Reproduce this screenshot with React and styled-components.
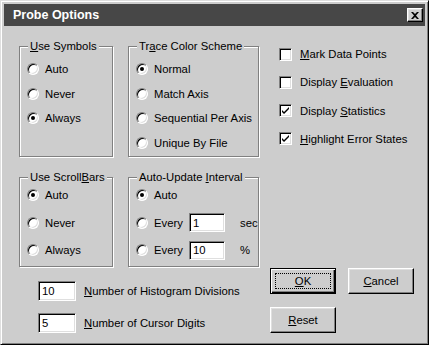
import React from "react";
import styled, { createGlobalStyle, css } from "styled-components";

const face = "#cdcdcd";

const GlobalStyle = createGlobalStyle`
  html, body { margin: 0; padding: 0; background: #fff; }
  body {
    font-family: "Liberation Sans", Arial, sans-serif;
    font-size: 11.3px;
    color: #000;
  }
`;

const Window = styled.div`
  width: 429px;
  height: 345px;
  box-sizing: border-box;
  background: ${face};
  border: 1px solid;
  border-color: #dfdfdf #000 #000 #dfdfdf;
  box-shadow: inset 1px 1px 0 #fff, inset -1px -1px 0 #808080;
  padding: 3px;
  display: flex;
  flex-direction: column;
`;

const TitleBar = styled.div`
  height: 22px;
  background: #474747;
  display: flex;
  align-items: center;
  justify-content: space-between;
  padding: 0 2px 0 9px;
  >.title{
    color: #fff;
    font-weight: bold;
    font-size: 12.5px;
  }
`;

const CloseButton = styled.div`
  width: 16px;
  height: 14px;
  box-sizing: border-box;
  background: ${face};
  border: 1px solid;
  border-color: #fff #000 #000 #fff;
  box-shadow: inset -1px -1px 0 #808080, inset 1px 1px 0 #dfdfdf;
  display: flex;
  align-items: center;
  justify-content: center;
`;

const Body = styled.div`
  padding: 20px 0 0 15px;
`;

const Top = styled.div`
  display: flex;
`;

const Groups = styled.div`
  display: grid;
  grid-template-columns: 94px 131px;
  grid-template-rows: 111px 90px;
  column-gap: 15px;
  row-gap: 20px;
`;

const Group = styled.div`
  position: relative;
  box-sizing: border-box;
  border: 1px solid #808080;
  box-shadow: inset 1px 1px 0 #fff, 1px 1px 0 #fff;
  padding: ${p => p.$top}px 0 0 7px;
  display: flex;
  flex-direction: column;
  gap: ${p => p.$gap}px;
`;

const Legend = styled.span`
  position: absolute;
  top: -8px;
  left: 8px;
  padding: 0 2px;
  line-height: 14px;
  background: ${face};
  white-space: nowrap;
`;

const Row = styled.label`
  display: flex;
  align-items: center;
  height: 16px;
  gap: 6px;
  white-space: nowrap;
`;

const RadioDot = styled.span`
  position: relative;
  flex: none;
  width: 12px;
  height: 12px;
  box-sizing: border-box;
  border-radius: 50%;
  border: 1px solid;
  border-color: #808080 #fff #fff #808080;
  box-shadow: inset 1px 1px 0 #000, inset -1px -1px 0 #dfdfdf;
  background: #fff;
  ${p => p.$on && css`
    &::after{
      content: "";
      position: absolute;
      left: 3px;
      top: 3px;
      width: 4px;
      height: 4px;
      border-radius: 50%;
      background: #000;
    }
  `}
`;

const EveryText = styled.span`
  width: 29px;
`;

const Unit = styled.span`
  margin-left: 9px;
`;

const Checks = styled.div`
  margin-left: 20px;
  display: flex;
  flex-direction: column;
  gap: 12.33px;
`;

const CheckRow = styled.label`
  display: flex;
  align-items: center;
  height: 16px;
  gap: 8px;
  white-space: nowrap;
`;

const CheckBox = styled.span`
  flex: none;
  width: 13px;
  height: 13px;
  box-sizing: border-box;
  border: 1px solid;
  border-color: #808080 #fff #fff #808080;
  box-shadow: inset 1px 1px 0 #000, inset -1px -1px 0 #dfdfdf;
  background: #fff;
  display: flex;
  align-items: center;
  justify-content: center;
`;

const TextBox = styled.input`
  box-sizing: border-box;
  width: ${p => p.$w}px;
  height: ${p => p.$h}px;
  margin: 0;
  padding: 0 3px;
  font: inherit;
  color: #000;
  background: #fff;
  border: 1px solid;
  border-color: #808080 #fff #fff #808080;
  box-shadow: inset 1px 1px 0 #000, inset -1px -1px 0 #dfdfdf;
  outline: none;
`;

const Bottom = styled.div`
  display: flex;
  margin-top: 1px;
`;

const Fields = styled.div`
  width: 232px;
  margin-left: 19px;
  padding-top: 13px;
  display: flex;
  flex-direction: column;
  gap: 12px;
`;

const FieldRow = styled.div`
  display: flex;
  align-items: center;
  gap: 8px;
  white-space: nowrap;
`;

const Buttons = styled.div`
  display: grid;
  grid-template-columns: 66px 66px;
  grid-auto-rows: 26px;
  column-gap: 12px;
  row-gap: 13px;
`;

const Button = styled.button`
  box-sizing: border-box;
  width: 66px;
  height: 26px;
  padding: 0;
  font: inherit;
  color: #000;
  background: ${face};
  border: 1px solid;
  border-color: #fff #000 #000 #fff;
  box-shadow: inset -1px -1px 0 #808080, inset 1px 1px 0 #dfdfdf;
  display: flex;
  align-items: center;
  justify-content: center;
  ${p => p.$default && css`
    border-color: #000;
    box-shadow: inset 1px 1px 0 #fff, inset -1px -1px 0 #000, inset -2px -2px 0 #808080;
    >span{
      flex: 1;
      align-self: stretch;
      margin: 4px;
      border: 1px dotted #000;
      display: flex;
      align-items: center;
      justify-content: center;
    }
  `}
`;

const Radio = ({ on, children }) => (
  <Row>
    <RadioDot $on={on} />
    {children}
  </Row>
);

const Check = ({ on, children }) => (
  <CheckRow>
    <CheckBox>
      {on && (
        <svg width="7" height="7" viewBox="0 0 7 7">
          <path d="M0 3 L0 5 L2 7 L7 2 L7 0 L2 5 Z" fill="#000" />
        </svg>
      )}
    </CheckBox>
    <span>{children}</span>
  </CheckRow>
);

export default function App() {
  return (
    <Window>
      <GlobalStyle />
      <TitleBar>
        <span className="title">Probe Options</span>
        <CloseButton>
          <svg width="8" height="7" viewBox="0 0 8 7">
            <path d="M0 0 H2 L4 2 L6 0 H8 L5 3.5 L8 7 H6 L4 5 L2 7 H0 L3 3.5 Z" fill="#000" />
          </svg>
        </CloseButton>
      </TitleBar>
      <Body>
        <Top>
          <Groups>
            <Group $top={14} $gap={8.67}>
              <Legend><u>U</u>se Symbols</Legend>
              <Radio>Auto</Radio>
              <Radio>Never</Radio>
              <Radio on>Always</Radio>
            </Group>
            <Group $top={14} $gap={8.67}>
              <Legend>Tr<u>a</u>ce Color Scheme</Legend>
              <Radio on>Normal</Radio>
              <Radio>Match Axis</Radio>
              <Radio>Sequential Per Axis</Radio>
              <Radio>Unique By File</Radio>
            </Group>
            <Group $top={9} $gap={11.5}>
              <Legend>Use Scroll<u>B</u>ars</Legend>
              <Radio on>Auto</Radio>
              <Radio>Never</Radio>
              <Radio>Always</Radio>
            </Group>
            <Group $top={9} $gap={11.5}>
              <Legend>Auto-Update <u>I</u>nterval</Legend>
              <Radio on>Auto</Radio>
              <Radio>
                <EveryText>Every</EveryText>
                <TextBox $w={36} $h={19} defaultValue="1" />
                <Unit>sec</Unit>
              </Radio>
              <Radio>
                <EveryText>Every</EveryText>
                <TextBox $w={36} $h={19} defaultValue="10" />
                <Unit>%</Unit>
              </Radio>
            </Group>
          </Groups>
          <Checks>
            <Check><u>M</u>ark Data Points</Check>
            <Check>Display <u>E</u>valuation</Check>
            <Check on>Display <u>S</u>tatistics</Check>
            <Check on><u>H</u>ighlight Error States</Check>
          </Checks>
        </Top>
        <Bottom>
          <Fields>
            <FieldRow>
              <TextBox $w={38} $h={20} defaultValue="10" />
              <span><u>N</u>umber of Histogram Divisions</span>
            </FieldRow>
            <FieldRow>
              <TextBox $w={38} $h={20} defaultValue="5" />
              <span><u>N</u>umber of Cursor Digits</span>
            </FieldRow>
          </Fields>
          <Buttons>
            <Button $default><span><u>O</u>K</span></Button>
            <Button><u>C</u>ancel</Button>
            <Button><u>R</u>eset</Button>
          </Buttons>
        </Bottom>
      </Body>
    </Window>
  );
}
